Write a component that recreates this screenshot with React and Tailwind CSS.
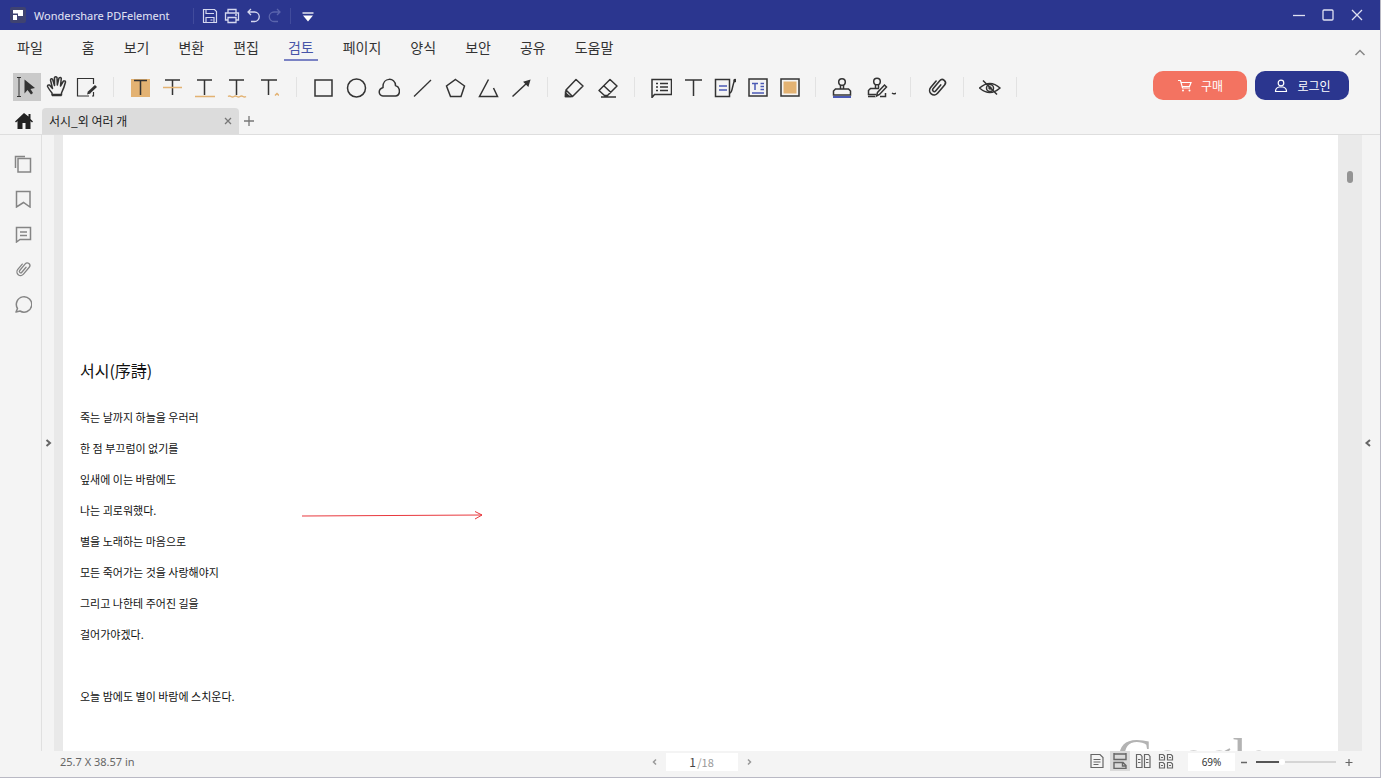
import React, { useState } from 'react';

const Icon = ({ size = 22, width = 1.5, className = '', children }) => (
  <svg
    width={size}
    height={size}
    viewBox={`0 0 ${size} ${size}`}
    fill="none"
    stroke="currentColor"
    strokeWidth={width}
    className={`shrink-0 ${className}`}
    aria-hidden="true"
  >
    {children}
  </svg>
);

const Clip = ({ size = 22 }) => (
  <svg width={size} height={size} viewBox="0 0 22 22" fill="none" stroke="currentColor" strokeWidth="1.6" strokeLinecap="round" aria-hidden="true">
    <path d="M6.500 7v8.500a4.500 4.500 0 0 0 9 0V4.500a3.200 3.200 0 0 0-6.400 0V15a1.700 1.700 0 0 0 3.400 0V7" transform="rotate(40 11 11)" />
  </svg>
);

const ORANGE = '#e3b272';
const BLUE = '#4b5ab5';

const menus = ['홈', '보기', '변환', '편집', '검토', '페이지', '양식', '보안', '공유', '도움말'];

const poem = [
  '죽는 날까지 하늘을 우러러',
  '한 점 부끄럼이 없기를',
  '잎새에 이는 바람에도',
  '나는 괴로워했다.',
  '별을 노래하는 마음으로',
  '모든 죽어가는 것을 사랑해야지',
  '그리고 나한테 주어진 길을',
  '걸어가야겠다.',
  '',
  '오늘 밤에도 별이 바람에 스치운다.',
];

const letterT = <path d="M4 4h15M11.500 4v15" />;

const toolGroups = [
  {
    id: 'basic',
    className: 'gap-0.5',
    tools: [
      {
        label: '선택',
        icon: (
          <Icon>
            <path d="M1 1.500h4M3 1.500v19M1 20.500h4" strokeWidth="1" />
            <path d="M8.500 3.500v14l3-3.500 3.500 4.500 2-1.500-2.500-4 4.500-1z" fill="currentColor" stroke="none" />
          </Icon>
        ),
      },
      {
        label: '손',
        icon: (
          <Icon className="mb-0.5">
            <path
              d="M6 20v-2Q3.500 15 1.500 11.500q0-2 2-1.500L6.500 13.500 4.500 5q.5-2 2-1l2 6.500v-8q1.200-1.700 2.500 0l.3 7.500L13 3q1.500-1.200 2.300.3L14.500 11l3-5q1.700-.5 2 1-1.500 6-4 11v2z"
              strokeLinejoin="round"
            />
            <path d="M6 20h9.500" strokeWidth="2.5" />
          </Icon>
        ),
      },
      {
        label: '편집',
        icon: (
          <Icon>
            <path d="M17.500 8V2.500h-16V20H13M17.500 16v4H16" strokeWidth="1.2" />
            <path d="M13 16.500l7-6.500" strokeWidth="3" />
            <path d="M11 18.500l1-3.500 2.500 2.500z" fill="currentColor" stroke="none" />
          </Icon>
        ),
      },
    ],
  },
  {
    id: 'markup',
    className: 'gap-1 mr-0.5',
    tools: [
      {
        label: '강조 표시',
        icon: (
          <Icon>
            <rect x="2" y="3" width="19" height="18" fill={ORANGE} stroke="none" />
            <path d="M5 4.500h13M11.500 4.500V19" />
          </Icon>
        ),
      },
      {
        label: '취소선',
        icon: (
          <Icon>
            {letterT}
            <path d="M2 11.500h19" stroke={ORANGE} />
          </Icon>
        ),
      },
      {
        label: '밑줄',
        icon: (
          <Icon>
            {letterT}
            <path d="M2 20.500h20" stroke={ORANGE} />
          </Icon>
        ),
      },
      {
        label: '물결 밑줄',
        icon: (
          <Icon>
            {letterT}
            <path d="M3 20.500q1.500-1 3 0t3 0 3 0 3 0 3 0 3 0" stroke={ORANGE} />
          </Icon>
        ),
      },
      {
        label: '캐럿',
        icon: (
          <Icon>
            <path d="M4 4h16M11.500 4v15" />
            <path d="M18 19.500l2-2 2 2" stroke={ORANGE} />
          </Icon>
        ),
      },
    ],
  },
  {
    id: 'shape',
    className: 'gap-[5px]',
    tools: [
      { label: '사각형', icon: <Icon><rect x="3" y="4" width="17" height="16" /></Icon> },
      { label: '타원', icon: <Icon><circle cx="11.5" cy="12" r="9" /></Icon> },
      {
        label: '구름',
        icon: (
          <Icon>
            <path d="M5 20C.5 19.500-.5 13.500 5 11.500 4.500 1 17.500 1 17.500 9.500 23 11.500 22.500 19.500 17.500 20z" />
          </Icon>
        ),
      },
      { label: '선', icon: <Icon width={1.3}><path d="M3 20.500L20 4" /></Icon> },
      { label: '다각형', icon: <Icon><path d="M11.500 3.500l9 6.500-3.500 10.500H6.500L2.500 10z" /></Icon> },
      { label: '연결선', icon: <Icon><path d="M11.500 3.500L2.500 20.500h18l-4-8.500" /></Icon> },
      {
        label: '화살표',
        icon: (
          <Icon>
            <path d="M2.500 20.500L17 7" />
            <path d="M19.500 4.500l-1.500 5-3.500-3.500z" fill="currentColor" />
          </Icon>
        ),
      },
    ],
  },
  {
    id: 'draw',
    className: 'gap-1.5',
    tools: [
      {
        label: '연필',
        icon: (
          <Icon>
            <path d="M2.500 20.500l.5-6.500L13 3.500l7 6.500L9.500 20.500zM3 14l6.500 6.500" strokeLinejoin="round" />
            <path d="M2.500 17l4 3.500h-4z" fill="currentColor" />
          </Icon>
        ),
      },
      {
        label: '지우개',
        icon: (
          <Icon>
            <path d="M13 3.500l7 6.500-9.500 9.500H7.500l-5.500-5zM6.500 9.500l7.500 7M4 21h15" strokeLinejoin="round" />
          </Icon>
        ),
      },
    ],
  },
  {
    id: 'note',
    className: 'gap-1',
    tools: [
      {
        label: '메모',
        icon: (
          <Icon>
            <path d="M2 21.500V3.500h19.500v15H4.500z" />
            <path d="M6 7.500h2M10 7.500h8M6 11h2M10 11h8M6 14.500h2M10 14.500h8" />
          </Icon>
        ),
      },
      { label: '타자기', icon: <Icon><path d="M3 4h17M11.500 4v16" /></Icon> },
      {
        label: '설명선',
        icon: (
          <Icon>
            <path d="M15.500 13v7.500H1.500V3.500h14v10" />
            <path d="M16 17c3-1 2-9 5-13" />
            <path d="M5 10h8M5 14h8" stroke={BLUE} />
            <circle cx="21" cy="4.500" r="1" fill="currentColor" />
          </Icon>
        ),
      },
      {
        label: '텍스트 상자',
        icon: (
          <Icon>
            <rect x="3" y="3" width="18" height="17" />
            <path d="M6 7.500h6M9 7.500V14M14.500 7.500H18M14.500 10.500H18M14.500 13.500H18M6 17h12" stroke={BLUE} />
          </Icon>
        ),
      },
      {
        label: '영역 강조',
        icon: (
          <Icon>
            <rect x="3" y="3" width="18" height="17" />
            <rect x="5.500" y="5.500" width="13" height="12" fill={ORANGE} stroke="none" />
          </Icon>
        ),
      },
    ],
  },
  {
    id: 'stamp',
    className: 'gap-2',
    tools: [
      {
        label: '스탬프',
        icon: (
          <Icon>
            <circle cx="11" cy="6" r="3.300" />
            <path d="M9.500 9v4M12.500 9v4M2.500 19v-4l2-2h13l2 2v4z" />
            <path d="M2 21h18" stroke={BLUE} strokeWidth="2" />
          </Icon>
        ),
      },
      {
        label: '서명',
        wide: true,
        icon: (
          <Icon size={30}>
            <circle cx="11" cy="9.500" r="3.300" />
            <path d="M9.500 12.500v4M12.500 12.500v4M10 22.500H2.500v-4l2-2H13M2 24.500h7M14 24.500h5.500V21" />
            <path d="M10.500 24l1-3.500 7-7.500 2 2-7 7.500z" />
            <path d="M26 21q2 1.500 4 0" />
          </Icon>
        ),
      },
    ],
  },
  {
    id: 'attach',
    className: '',
    tools: [{ label: '첨부 파일', icon: <Clip /> }],
  },
  {
    id: 'hide',
    className: '',
    tools: [
      {
        label: '주석 숨기기',
        icon: (
          <Icon>
            <path d="M.5 12Q11 3 21 12 11 21 .5 12zM4 4.500l14 14" />
            <circle cx="11" cy="12" r="3.500" />
            <circle cx="11" cy="12" r="1" fill="currentColor" />
          </Icon>
        ),
      },
    ],
  },
];

const sideItems = [
  { label: '축소판', icon: <Icon size={18}><path d="M1.500 13V1.500H11M4 3.500h12.500V17H4z" /></Icon> },
  { label: '책갈피', icon: <Icon size={18}><path d="M2.500 1.500H16V17l-6.500-4.500L2.500 17z" /></Icon> },
  { label: '주석', icon: <Icon size={18}><path d="M2.500 17V2.500h14v12H6zM6 7h7M6 10.500h7" /></Icon> },
  { label: '첨부', icon: <Clip size={18} /> },
  {
    label: '검색',
    icon: (
      <Icon size={18}>
        <path d="M2 17l1.500-3.500a7.700 7.700 0 1 1 2.500 2.500z" strokeLinejoin="round" />
      </Icon>
    ),
  },
];

const viewModes = [
  {
    label: '단일 페이지',
    icon: <Icon size={16} width={1.2}><path d="M2 1.500h9l3 3v10H2zM4.500 6.500h7M4.500 9h7M4.500 11.500h5" /></Icon>,
  },
  {
    label: '연속 보기',
    icon: <Icon size={16} width={1.4}><path d="M2 0v6.500h12V0M2 15.500v-6h9l3 3v3zM2 1h12M10.500 9.500v3.500H14" /></Icon>,
  },
  {
    label: '두 페이지',
    icon: (
      <Icon size={16} width={1.2}>
        <path d="M1.500 1.500h4l1.500 2v11H1.500zM9.500 1.500h4l1.500 2v11H9.500zM3 6.500h2.500M3 9.500h2.500M11 6.500h2.500M11 9.500h2.500" />
      </Icon>
    ),
  },
  {
    label: '두 페이지 연속',
    icon: (
      <Icon size={16} width={1.2}>
        <path d="M1.500 1.500H5l1.500 1.500v4h-5zM9.500 1.500H13l1.500 1.500v4h-5zM1.500 9.500H5L6.500 11v4h-5zM9.500 9.500H13l1.500 1.500v4h-5zM3 4.500h2M11 4.500h2M3 12.500h2M11 12.500h2" />
      </Icon>
    ),
  },
];

const TitleBar = () => (
  <header className="flex h-[30px] shrink-0 items-center bg-[#2b368f] pl-2.5 pr-[15px] pt-0.5 text-white">
    <Icon size={16} className="mb-0.5">
      <rect width="16" height="16" rx="2" fill="#3f4371" stroke="none" />
      <path d="M3 3h10v6H8V6.500H3zM3 8h4v5H3z" fill="#fff" stroke="none" />
    </Icon>
    <span className="ml-2 w-[159px] font-['Noto_Sans',sans-serif] text-[11px] text-[#e3e5f5]">Wondershare PDFelement</span>
    <span className="h-4 w-px bg-[#414b9c]" />
    <div className="ml-2 flex items-center gap-1.5 text-[#d5d8ef]">
      <button aria-label="저장">
        <Icon size={16} width={1.2}>
          <path d="M1.500 1.500h11l2 2v11h-13zM4 1.500v4h8M4 14.500v-5h8v5M8.500 12h2" />
        </Icon>
      </button>
      <button aria-label="인쇄">
        <Icon size={16} width={1.3}>
          <path d="M4 5V1.500h8V5M4 12H1.500V5h13v7H12M4 9.500h8v5H4zM11 7h2" />
        </Icon>
      </button>
      <button aria-label="실행 취소">
        <Icon size={16} width={1.3}><path d="M5 1L2 4l3 3M2 4h6.500a4.500 4.500 0 0 1 0 9.500H5" /></Icon>
      </button>
      <button aria-label="다시 실행" className="text-[#5a64ad]">
        <Icon size={16} width={1.3}><path d="M9 1l3 3-3 3M12 4H6a4.500 4.500 0 0 0 0 9.500h4" /></Icon>
      </button>
    </div>
    <span className="ml-1.5 h-4 w-px bg-[#414b9c]" />
    <button aria-label="사용자 지정" className="ml-[9px]">
      <Icon size={16} width={1.3}>
        <path d="M2.500 5h11" />
        <path d="M3 7.500h10l-5 6z" fill="currentColor" stroke="none" />
      </Icon>
    </button>
    <div className="ml-auto flex items-center gap-[13px] pb-0.5 text-[#dfe1f2]">
      <button aria-label="최소화"><Icon size={16} width={1.3}><path d="M2 8.500h12" /></Icon></button>
      <button aria-label="최대화"><Icon size={16} width={1.3}><rect x="3" y="3" width="10" height="10" rx="1" /></Icon></button>
      <button aria-label="닫기"><Icon size={16} width={1.3}><path d="M3 3l10 10M13 3L3 13" /></Icon></button>
    </div>
  </header>
);

const MenuBar = ({ active, onSelect }) => (
  <nav className="flex h-9 shrink-0 items-center pl-[17px] pr-3 text-[14px] leading-5 text-[#333]">
    <button className="mb-0.5 mr-[35px]">파일</button>
    <div className="flex gap-[21px] pt-0.5">
      {menus.map((name) => (
        <button
          key={name}
          onClick={() => onSelect(name)}
          className={`border-b-2 px-1 pb-0.5 ${
            active === name ? 'border-[#7b83c4] text-[#4754a8]' : 'border-transparent'
          }`}
        >
          {name}
        </button>
      ))}
    </div>
    <button aria-label="리본 접기" className="ml-auto mt-2.5 text-[#888]">
      <Icon size={16}><path d="M3.500 10L8 5.500l4.500 4.500" /></Icon>
    </button>
  </nav>
);

const Toolbar = ({ tool, onTool }) => (
  <div className="flex h-[42px] shrink-0 items-center pl-[13px] pr-[31px] text-[#333]">
    {toolGroups.map((group) => (
      <React.Fragment key={group.id}>
        <div className={`flex items-center ${group.className}`}>
          {group.tools.map((t) => (
            <button
              key={t.label}
              aria-label={t.label}
              onClick={() => onTool(t.label)}
              className={`flex h-7 items-center justify-center ${t.wide ? 'w-[34px]' : 'w-7'} ${
                tool === t.label ? 'bg-[#cacaca]' : ''
              }`}
            >
              {t.icon}
            </button>
          ))}
        </div>
        <span className="mx-3 h-5 w-px bg-[#e2e2e2]" />
      </React.Fragment>
    ))}
    <div className="mb-[3px] ml-auto flex gap-2 text-[12px] text-white">
      <button className="flex h-[29px] w-[94px] items-center justify-center gap-2 rounded-[10px] bg-[#f37361]">
        <Icon size={16} width={1.2}>
          <path d="M1 2.500h2.500L5.500 10H13M4 4.500h10l-1.500 4H5" />
          <circle cx="6" cy="12.500" r="1" fill="currentColor" stroke="none" />
          <circle cx="12.500" cy="12.500" r="1" fill="currentColor" stroke="none" />
        </Icon>
        구매
      </button>
      <button className="flex h-[29px] w-[94px] items-center justify-center gap-2 rounded-[10px] bg-[#2b368f]">
        <Icon size={16} width={1.2}>
          <circle cx="8" cy="5" r="2.800" />
          <path d="M2.500 13.500c0-3 1.500-4 3.500-4.500h4c2 .5 3.500 1.500 3.500 4.500z" />
        </Icon>
        로그인
      </button>
    </div>
  </div>
);

const TabBar = () => (
  <div className="flex h-[27px] shrink-0 items-center border-b border-[#dedede] pl-[15px]">
    <button aria-label="홈" className="text-[#222]">
      <Icon size={18}>
        <path d="M9 1L0 9.500l1 1L2.500 9v8h5v-6h3v6h5V9l1.500 1.500 1-1-2.500-2.500V2h-2v2.500z" fill="currentColor" stroke="none" />
      </Icon>
    </button>
    <div className="ml-[9px] flex h-full w-[197px] items-center justify-between rounded-t-sm bg-[#dcdcdc] pl-[7px] pr-1.5 text-[12px] text-[#222]">
      <span>서시_외 여러 개</span>
      <button aria-label="탭 닫기" className="text-[#777]">
        <Icon size={10} width={1.3}><path d="M2 2l6 6M8 2L2 8" /></Icon>
      </button>
    </div>
    <button aria-label="새 탭" className="ml-[3px] text-[#777]">
      <Icon size={14} width={1.3}><path d="M7 2v10M2 7h10" /></Icon>
    </button>
  </div>
);

const DocumentPage = () => (
  <main className="relative min-w-0 flex-1 overflow-hidden bg-white">
    <article className="pl-[17px] pt-[219px] text-[11px] text-[#111]">
      <h1 className="text-[16px] leading-8">서시(序詩)</h1>
      <div className="mt-4 leading-[31px]">
        {poem.map((line, i) => (
          <p key={i} className="h-[31px]">{line}</p>
        ))}
      </div>
    </article>
    {/* arrow annotation and watermark sit freely on the page */}
    <svg className="absolute left-[239px] top-[375px]" width="182" height="12" fill="none" stroke="#e8383d" aria-hidden="true">
      <path d="M0 6L180 5M173 1.500l7 3.500-7 4" />
    </svg>
    <span className="absolute -bottom-9 right-[68px] font-['Liberation_Serif',serif] text-[52px] leading-[58px] text-[#b3b3b3]">
      Google
    </span>
  </main>
);

const StatusBar = ({ zoom, onZoom }) => (
  <footer className="flex h-[26px] shrink-0 items-center pb-1 pl-[60px] pr-[25px] text-[11px] text-[#666]">
    <span className="flex-1 font-['Noto_Sans',sans-serif]">25.7 X 38.57 in</span>
    <div className="mr-3 flex items-center gap-1.5 text-[#999]">
      <button aria-label="이전 페이지"><Icon size={10}><path d="M6 2.500L3.500 5 6 7.500" /></Icon></button>
      <label className="flex h-[18px] w-[72px] items-center justify-center bg-white">
        <input aria-label="페이지" defaultValue="1" className="w-2 text-[12px] text-[#444] outline-none" />
        /18
      </label>
      <button aria-label="다음 페이지"><Icon size={10}><path d="M4 2.500L6.500 5 4 7.500" /></Icon></button>
    </div>
    <div className="flex flex-1 items-center justify-end">
      <div className="mb-0.5 flex gap-[3px]">
        {viewModes.map((mode, i) => (
          <button
            key={mode.label}
            aria-label={mode.label}
            className={`flex h-5 w-5 items-center justify-center ${i === 1 ? 'bg-[#dadada]' : ''}`}
          >
            {mode.icon}
          </button>
        ))}
      </div>
      <input
        aria-label="확대 비율"
        value={`${zoom}%`}
        readOnly
        className="ml-3 h-[18px] w-[47px] bg-white text-center font-['Noto_Sans',sans-serif] text-[10px] text-[#333] outline-none"
      />
      <button aria-label="축소" className="ml-1" onClick={() => onZoom(zoom - 1)}>
        <Icon size={10}><path d="M2 5.500h6" /></Icon>
      </button>
      <input
        type="range"
        aria-label="확대/축소"
        min="10"
        max="200"
        value={zoom}
        onChange={(e) => onZoom(Number(e.target.value))}
        className="mx-[7px] h-0.5 w-20 appearance-none bg-[linear-gradient(to_right,#555_30%,#d5d5d5_30%)] [&::-webkit-slider-thumb]:h-1.5 [&::-webkit-slider-thumb]:w-1.5 [&::-webkit-slider-thumb]:appearance-none [&::-webkit-slider-thumb]:rounded-full [&::-webkit-slider-thumb]:bg-white"
      />
      <button aria-label="확대" onClick={() => onZoom(zoom + 1)}>
        <Icon size={12} width={1.2}><path d="M2.500 6.500h7M6 3v7" /></Icon>
      </button>
    </div>
  </footer>
);

const App = () => {
  const [activeMenu, setActiveMenu] = useState('검토');
  const [tool, setTool] = useState('선택');
  const [zoom, setZoom] = useState(69);

  return (
    <div className="flex h-screen flex-col overflow-hidden border-b border-r border-[#b9b9c4] bg-[#f4f4f4] font-['Noto_Sans_CJK_KR',sans-serif]">
      <TitleBar />
      <MenuBar active={activeMenu} onSelect={setActiveMenu} />
      <Toolbar tool={tool} onTool={setTool} />
      <TabBar />

      <div className="flex min-h-0 flex-1">
        <aside className="flex w-[42px] shrink-0 flex-col items-center gap-[17px] border-r border-[#e0e0e0] pl-1 pt-5 text-[#858585]">
          {sideItems.map((item) => (
            <button key={item.label} aria-label={item.label} className="h-[18px]">{item.icon}</button>
          ))}
        </aside>
        <button aria-label="패널 열기" className="flex w-3 shrink-0 items-center justify-center text-[#666]">
          <Icon size={10} width={2}><path d="M3.500 2L7 5 3.500 8" /></Icon>
        </button>
        <div className="w-[9px] shrink-0 bg-[#e9e9e9]" />
        <DocumentPage />
        <div className="flex w-6 shrink-0 justify-center bg-[#eaeaea] pt-9">
          <div className="h-3 w-1.5 rounded-sm bg-[#949494]" />
        </div>
        <button aria-label="속성 열기" className="flex w-[18px] shrink-0 items-center pl-px text-[#666]">
          <Icon size={10} width={2}><path d="M7 2L3.500 5 7 8" /></Icon>
        </button>
      </div>

      <StatusBar zoom={zoom} onZoom={setZoom} />
    </div>
  );
};

export default App;
